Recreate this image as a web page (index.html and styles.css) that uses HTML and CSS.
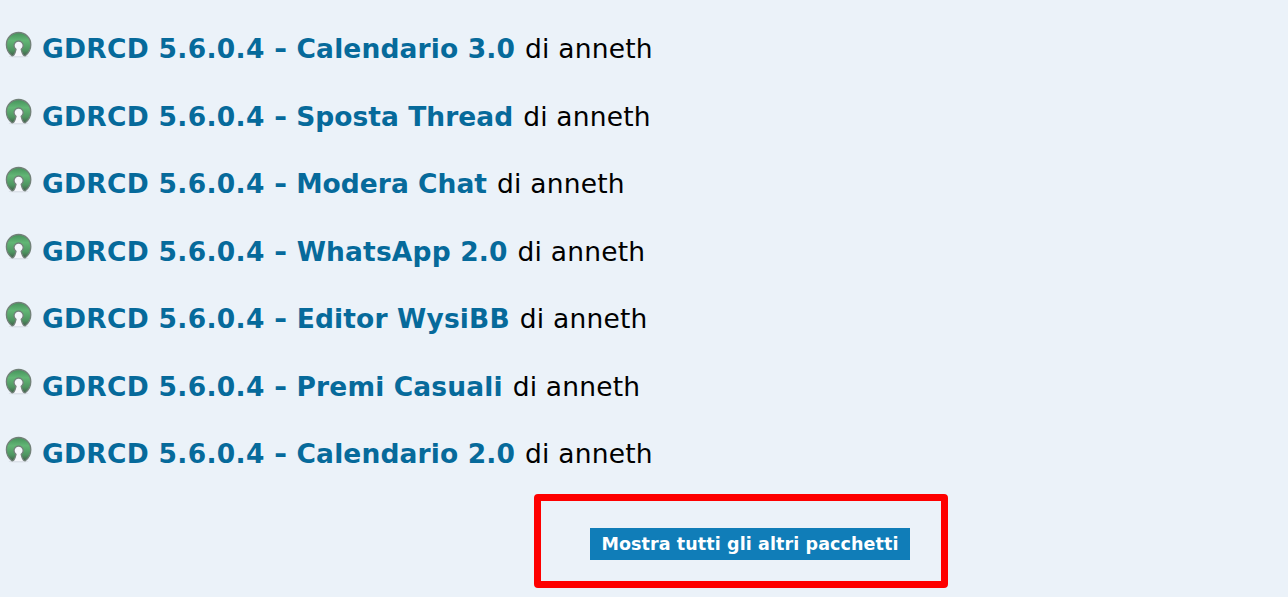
FILE: index.html
```html
<!DOCTYPE html>
<html lang="it">
<head>
<meta charset="utf-8">
<title>Pacchetti</title>
<link rel="stylesheet" href="styles.css">
</head>
<body>
<svg class="defs" width="0" height="0" aria-hidden="true">
  <defs>
    <linearGradient id="green" x1="0" y1="0" x2="0" y2="1">
      <stop offset="0" stop-color="#45915a"/>
      <stop offset=".35" stop-color="#62b675"/>
      <stop offset=".75" stop-color="#4f9661"/>
      <stop offset="1" stop-color="#42604a"/>
    </linearGradient>
    <symbol id="osi" viewBox="0 0 28 28">
      <ellipse cx="14.600" cy="25.400" rx="10" ry="1.200" fill="#dce1e9"/>
      <path d="M10.500 25L12 18 10 14.500l4.600-4 4.600 4L17.200 18l1.500 7z" fill="#f5f6fb"/>
      <path d="M8 24.800C4.500 22 2.400 18.400 2.400 13.700a12.200 12.200 0 0 1 24.400 0C26.800 18.400 24.700 22 21.200 24.800 19.600 25 18 22 17.200 18.400A4.600 4.600 0 1 0 12 18.400C11.200 22 9.600 25 8 24.800z" fill="url(#green)" stroke="#728078" stroke-width="1.300" stroke-linejoin="round"/>
    </symbol>
  </defs>
</svg>
<main class="page">
  <ul class="packages">
    <li class="package"><svg class="icon"><use href="#osi"/></svg><a class="name"><span class="version">GDRCD 5.6.0.4</span> <span class="dash">-</span> Calendario 3.0</a><span class="author">di anneth</span></li>
    <li class="package"><svg class="icon"><use href="#osi"/></svg><a class="name snug"><span class="version">GDRCD 5.6.0.4</span> <span class="dash">-</span> Sposta Thread</a><span class="author">di anneth</span></li>
    <li class="package"><svg class="icon"><use href="#osi"/></svg><a class="name snug"><span class="version">GDRCD 5.6.0.4</span> <span class="dash">-</span> Modera Chat</a><span class="author">di anneth</span></li>
    <li class="package"><svg class="icon"><use href="#osi"/></svg><a class="name wide"><span class="version">GDRCD 5.6.0.4</span> <span class="dash">-</span> WhatsApp 2.0</a><span class="author">di anneth</span></li>
    <li class="package"><svg class="icon"><use href="#osi"/></svg><a class="name wide"><span class="version">GDRCD 5.6.0.4</span> <span class="dash">-</span> Editor WysiBB</a><span class="author">di anneth</span></li>
    <li class="package"><svg class="icon"><use href="#osi"/></svg><a class="name"><span class="version">GDRCD 5.6.0.4</span> <span class="dash">-</span> Premi Casuali</a><span class="author">di anneth</span></li>
    <li class="package"><svg class="icon"><use href="#osi"/></svg><a class="name"><span class="version">GDRCD 5.6.0.4</span> <span class="dash">-</span> Calendario 2.0</a><span class="author">di anneth</span></li>
  </ul>
  <div class="highlight"><a class="more">Mostra tutti gli altri pacchetti</a></div>
</main>
</body>
</html>
```
FILE: styles.css
```css
* { box-sizing: border-box; }
body {
  margin: 0;
  background: #ebf2f9;
  font-family: Verdana, "DejaVu Sans", sans-serif;
  color: #000;
}
.defs { position: absolute; }
.page { height: 597px; overflow: hidden; padding-top: 15px; }
.packages { list-style: none; margin: 0; padding: 0 0 0 4px; }
.package {
  display: flex;
  align-items: center;
  height: 67.5px;
  font-size: 26.5px;
  white-space: nowrap;
}
.icon { width: 28px; height: 28px; margin: 0 10px 8px 0; flex: none; }
.name { color: #066a9b; font-weight: bold; margin-right: 10px; letter-spacing: .13px; }
.snug { letter-spacing: .02px; }
.wide { letter-spacing: .16px; }
.version { letter-spacing: .3px; }
.dash { display: inline-block; transform: scaleX(1.2); margin: 0 1px; }
.author { letter-spacing: .2px; }
.highlight {
  display: flex;
  align-items: center;
  justify-content: center;
  width: 414px;
  height: 94px;
  margin: 6px 0 0 534px;
  padding: 6px 0 0 18px;
  border: 7px solid #fe0000;
  border-radius: 4px;
}
.more {
  width: 320px;
  height: 32px;
  line-height: 32px;
  text-align: center;
  background: #107db8;
  color: #fff;
  font-size: 17.5px;
  letter-spacing: .1px;
  font-weight: bold;
  white-space: nowrap;
}
```
